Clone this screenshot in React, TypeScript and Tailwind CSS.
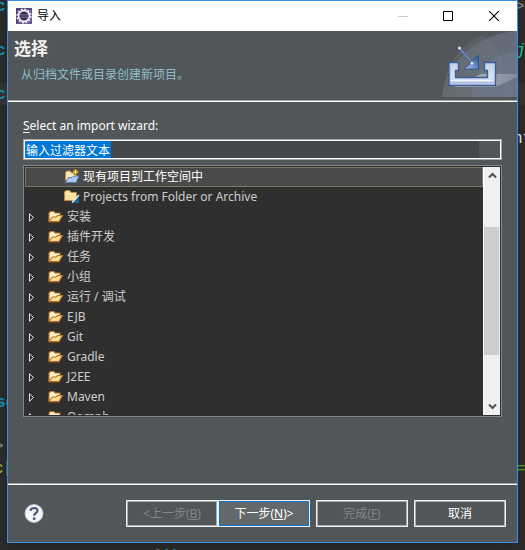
import React, { useState } from "react";

const uiFont = "font-['Noto_Sans','Noto_Sans_CJK_SC',sans-serif]";

function EclipseIcon() {
  return (
    <svg width="16" height="16" viewBox="0 0 16 16" aria-hidden="true" className="shrink-0">
      <rect width="16" height="16" fill="#54407c" />
      <path d="M0 16L16 0V16Z" fill="#6a5591" />
      <circle cx="8" cy="8" r="6.6" fill="none" stroke="#e8e4ee" strokeWidth="2" strokeDasharray="2 1.46" />
      <circle cx="8" cy="8" r="5.4" fill="#392d58" stroke="#f5f3f7" strokeWidth="1.6" />
      <path d="M4 6.5h8M3.6 8h8.8M4 9.5h8" stroke="#8880a5" strokeWidth=".6" />
    </svg>
  );
}

function ImportBanner() {
  return (
    <svg width="75" height="66" viewBox="0 0 75 66" aria-hidden="true" className="shrink-0">
      <defs>
        <linearGradient id="haze" x1="0" y1="0" x2="1" y2="0">
          <stop offset="0" stopColor="#656b72" />
          <stop offset="1" stopColor="#6a7489" />
        </linearGradient>
        <linearGradient id="tray" x1="0" y1="0" x2="0" y2="1">
          <stop offset="0" stopColor="#c3d0e8" />
          <stop offset="0.65" stopColor="#d8e2f3" />
          <stop offset="1" stopColor="#9fb3d9" />
        </linearGradient>
        <linearGradient id="shade" x1="0" y1="0" x2="1" y2="0">
          <stop offset="0" stopColor="#d2d5da" />
          <stop offset="1" stopColor="#8d929d" />
        </linearGradient>
        <linearGradient id="head" x1="0" y1="1" x2="1" y2="0">
          <stop offset="0" stopColor="#b3c8ec" />
          <stop offset="1" stopColor="#24478a" />
        </linearGradient>
      </defs>
      <path d="M0 66C3 34 34 2 75 0V66Z" fill="url(#haze)" opacity=".75" />
      <path d="M0 66C3 34 18 12 40 5C57 15 67 36 70 66Z" fill="#747b82" opacity=".28" />
      <path d="M30 66C30 42 49 22 75 21V66Z" fill="#78849b" opacity=".35" />
      <path d="M12 56L39 43H75V46L53 56Z" fill="url(#shade)" opacity=".75" />
      <path d="M7 31.500H16.500V39.500H13.500V46.500H45.500V39.500H42.500V31.500H53.500V54.500H7Z" fill="url(#tray)" stroke="#3c5c96" strokeWidth="1.400" />
      <path d="M8.500 33V53H52V33" fill="none" stroke="#b7c7e4" />
      <path d="M9 49.500H51" stroke="#f4f7fd" strokeWidth="1.500" />
      <path d="M17 17L30 31" stroke="#4468a8" strokeWidth="2.4" />
      <path d="M17 17L29 30" stroke="#a9bddf" strokeWidth=".8" />
      <circle cx="17.500" cy="17" r="1.500" fill="#dfe7f5" />
      <path d="M36.500 24V38H22.500Z" fill="url(#head)" stroke="#31549a" />
      <circle cx="30" cy="32" r="1.600" fill="#d5e2f7" />
    </svg>
  );
}

function FolderIcon() {
  return (
    <svg width="16" height="14" viewBox="0 0 16 14" aria-hidden="true" className="shrink-0">
      <path d="M1 11.500V3L2.500 1.500H6L7 3H12V6" fill="#fff0cf" stroke="#b8742a" strokeWidth="1.200" />
      <path d="M1 11.500L4.500 7H8L9.500 5.500H14.500L11 11.500Z" fill="#fcdb92" stroke="#b8742a" strokeWidth="1.200" />
      <path d="M1 12h10.500" stroke="#9b5d1e" />
    </svg>
  );
}

function NewProjectIcon() {
  return (
    <svg width="16" height="16" viewBox="0 0 16 16" aria-hidden="true" className="shrink-0">
      <path d="M1.500 12V3.500L3 2H6L7.500 3.500H12.500V8" fill="#fbe5b3" stroke="#bd8845" />
      <path d="M1.500 13.500L4.500 8.500H8L9.500 7H15L12 13.500Z" fill="#a9c8f3" stroke="#5379b7" />
      <path d="M11.500 0V6M8.500 3H14.500" stroke="#a07a1c" strokeWidth="3" />
      <path d="M11.500 1V5M9.500 3H13.500" stroke="#fff3a8" strokeWidth="1" />
    </svg>
  );
}

function ArchiveFolderIcon() {
  return (
    <svg width="16" height="16" viewBox="0 0 16 16" aria-hidden="true" className="shrink-0">
      <path d="M.5 11.500V3L2 1.500H5.500L7 3.500H12.500V11.500Z" fill="#fbdf9f" stroke="#c18c42" />
      <path d="M2 5H11" stroke="#fff2cf" />
      <path d="M15 6V14H8Z" fill="#1f689d" />
      <path d="M15 6L8 13.500" stroke="#f5f8fb" strokeWidth="1.200" />
    </svg>
  );
}

function Chevron({ down = false }: { down?: boolean }) {
  return (
    <svg width="9" height="7" viewBox="0 0 9 7" aria-hidden="true">
      <path d={down ? "M1 1.500L4.500 5L8 1.500" : "M1 5.500L4.500 2L8 5.500"} fill="none" stroke="#505050" strokeWidth="2" />
    </svg>
  );
}

const categories = ["安装", "插件开发", "任务", "小组", "运行 / 调试", "EJB", "Git", "Gradle", "J2EE", "Maven", "Oomph"];

function WizardTree() {
  return (
    <div className="mt-[5px] flex h-[252px] border border-[#80858a] bg-[#2f2f2f] p-px">
      <ul role="tree" aria-label="Import wizards" className="min-w-0 flex-1 overflow-hidden text-[#cccccc]">
        <li role="treeitem" aria-selected="true" className="flex h-5 items-center gap-[3px] border border-[#7d7765] bg-[#4a4a4a] pl-[38px] text-white">
          <NewProjectIcon />
          <span>现有项目到工作空间中</span>
        </li>
        <li role="treeitem" aria-selected="false" className="flex h-5 items-center gap-[3px] pl-[39px]">
          <ArchiveFolderIcon />
          <span>Projects from Folder or Archive</span>
        </li>
        {categories.map((name) => (
          <li key={name} role="treeitem" aria-selected="false" aria-expanded="false" className="flex h-5 items-center gap-[3px] pl-1">
            <svg width="6" height="9" viewBox="0 0 6 9" aria-hidden="true" className="mr-2.5 shrink-0">
              <path d="M.5 .7V8.300L4.500 4.500Z" fill="none" stroke="#e4e4e4" />
            </svg>
            <FolderIcon />
            <span>{name}</span>
          </li>
        ))}
      </ul>
      <div className="flex w-[17px] flex-col items-center border-l border-white bg-[#f0f0f0]">
        <button type="button" aria-label="Scroll up" className="flex h-[17px] w-full items-center justify-center">
          <Chevron />
        </button>
        <div className="w-full flex-1 pt-[43px] pr-px">
          <div className="h-32 bg-[#cdcdcd]" />
        </div>
        <button type="button" aria-label="Scroll down" className="flex h-[17px] w-full items-center justify-center">
          <Chevron down />
        </button>
      </div>
    </div>
  );
}

function WizardButton({ children, disabled = false, primary = false }: { children: React.ReactNode; disabled?: boolean; primary?: boolean }) {
  return (
    <button
      type="button"
      disabled={disabled}
      className={
        "h-[27px] w-[92px] border border-[#f0f0f0] whitespace-nowrap " +
        (primary
          ? "bg-[#63686b] text-white inset-ring inset-ring-[#0078d7]"
          : disabled
            ? "text-[#858585] inset-ring inset-ring-[#adadad]"
            : "text-white inset-ring inset-ring-[#adadad]")
      }
    >
      {children}
    </button>
  );
}

/* Slivers of the code editor that show round the dialog. */
function EditorBackdrop() {
  return (
    <div className="absolute inset-0 overflow-hidden bg-[#2b2b2b] font-['Liberation_Mono',monospace] text-base leading-[22px]">
      <div className="absolute inset-x-0 top-[83px] h-[22px] bg-[#333333]" />
      <div className="absolute inset-y-0 left-0 w-[7px] overflow-hidden font-bold text-[#1290b5]">
        <div className="absolute top-[-4px] left-[-4px]">cr</div>
        <div className="absolute top-10 left-[-4px]">cr</div>
        <div className="absolute top-[84px] left-[-4px]">cr</div>
        <div className="absolute top-[392px] left-[-4px]">sc</div>
        <div className="absolute top-[436px] left-[-6px] font-normal text-[#8a8a8a]">&gt;</div>
        <div className="absolute top-[458px] left-[-6px] font-normal text-[#9acd32]">c[</div>
      </div>
      <div className="absolute inset-y-0 right-0 w-[7px] overflow-hidden">
        <div className="absolute top-[-4px] left-[-3px] text-[#8a8a8a]">&gt;</div>
        <div className="absolute top-10 left-[-2px] text-[#17c694] italic">j</div>
        <div className="absolute top-[128px] left-[-5px] text-[#e6e6e6]">nt</div>
        <div className="absolute top-[458px] left-[-2px] text-[#4ca81e]">=</div>
      </div>
      <div className="absolute top-[546px] left-[150px] font-bold text-[#1290b5]">
        <span className="text-[#8a8a8a]">/</span>di
      </div>
    </div>
  );
}

export default function App() {
  const [filter, setFilter] = useState("输入过滤器文本");
  return (
    <div className={"relative min-h-screen px-[7px] pb-[7px] text-xs leading-5 " + uiFont}>
      <EditorBackdrop />
      <div role="dialog" aria-label="导入" className="relative border border-[#3a8ee6] bg-[#515658] text-white shadow-lg">
        <div className="flex h-[30px] items-center bg-white pl-2 text-black">
          <EclipseIcon />
          <span className="flex-1 pl-[5px]">导入</span>
          <button type="button" aria-label="Minimize" disabled className="flex h-full w-[45px] items-center justify-center">
            <svg width="10" height="10" viewBox="0 0 10 10"><path d="M0 5.500H10" stroke="#cccccc" /></svg>
          </button>
          <button type="button" aria-label="Maximize" className="flex h-full w-[46px] items-center justify-center">
            <svg width="10" height="10" viewBox="0 0 10 10"><path d="M.5 .5H9.500V9.500H.5Z" fill="none" stroke="#000000" /></svg>
          </button>
          <button type="button" aria-label="Close" className="flex h-full w-[46px] items-center justify-center">
            <svg width="10" height="10" viewBox="0 0 10 10"><path d="M0 0L10 10M10 0L0 10" stroke="#000000" strokeWidth="1.100" /></svg>
          </button>
        </div>

        <header className="flex h-[70px] justify-between border-b border-[#a0a0a0] pl-1.5">
          <div className="pt-2">
            <h1 className="text-[17px] leading-5 font-bold text-[#f2f2f2]">选择</h1>
            <p className="pt-1.5 pl-[7px] text-[#8fbfc9]">从归档文件或目录创建新项目。</p>
          </div>
          <ImportBanner />
        </header>

        <main className="border-t border-white px-[15px] pt-3.5 pb-[66px]">
          <label htmlFor="filter" className="block">
            <span className="underline underline-offset-2">S</span>elect an import wizard:
          </label>
          <div className="mt-[3px] flex h-[21px] border border-[#a3a7ac] bg-[#42474a]">
            <div className="flex min-w-0 flex-1 items-center border border-white">
              <input
                id="filter"
                size={12}
                value={filter}
                onChange={(event) => setFilter(event.target.value)}
                className="h-[17px] w-[86px] bg-[#0078d7] pl-px leading-4 outline-none"
              />
              <span className="ml-auto h-full w-[21px] bg-[#515658]" />
            </div>
          </div>
          <WizardTree />
        </main>

        <footer className="border-t border-[#a0a0a0]">
          <div className="flex items-center border-t border-white py-[15px] pr-[11px] pl-4">
            <button type="button" aria-label="Help" className="mr-auto">
              <svg width="20" height="20" viewBox="0 0 20 20" aria-hidden="true" className="block">
                <circle cx="10" cy="9.500" r="9" fill="#f4f5f7" stroke="#b9bfca" strokeWidth="1" />
                <path d="M6.500 6.900C6.700 3.100 13.600 3 13.500 6.700C13.400 9.100 10.200 8.900 10.200 11.800" fill="none" stroke="#46587c" strokeWidth="2.200" />
                <circle cx="10.200" cy="14.700" r="1.400" fill="#46587c" />
              </svg>
            </button>
            <div className="flex gap-1.5">
              <div className="flex">
                <WizardButton disabled>&lt;上一步(<u>B</u>)</WizardButton>
                <WizardButton primary>下一步(<u>N</u>)&gt;</WizardButton>
              </div>
              <WizardButton disabled>完成(<u>F</u>)</WizardButton>
              <WizardButton>取消</WizardButton>
            </div>
          </div>
        </footer>
      </div>
    </div>
  );
}
